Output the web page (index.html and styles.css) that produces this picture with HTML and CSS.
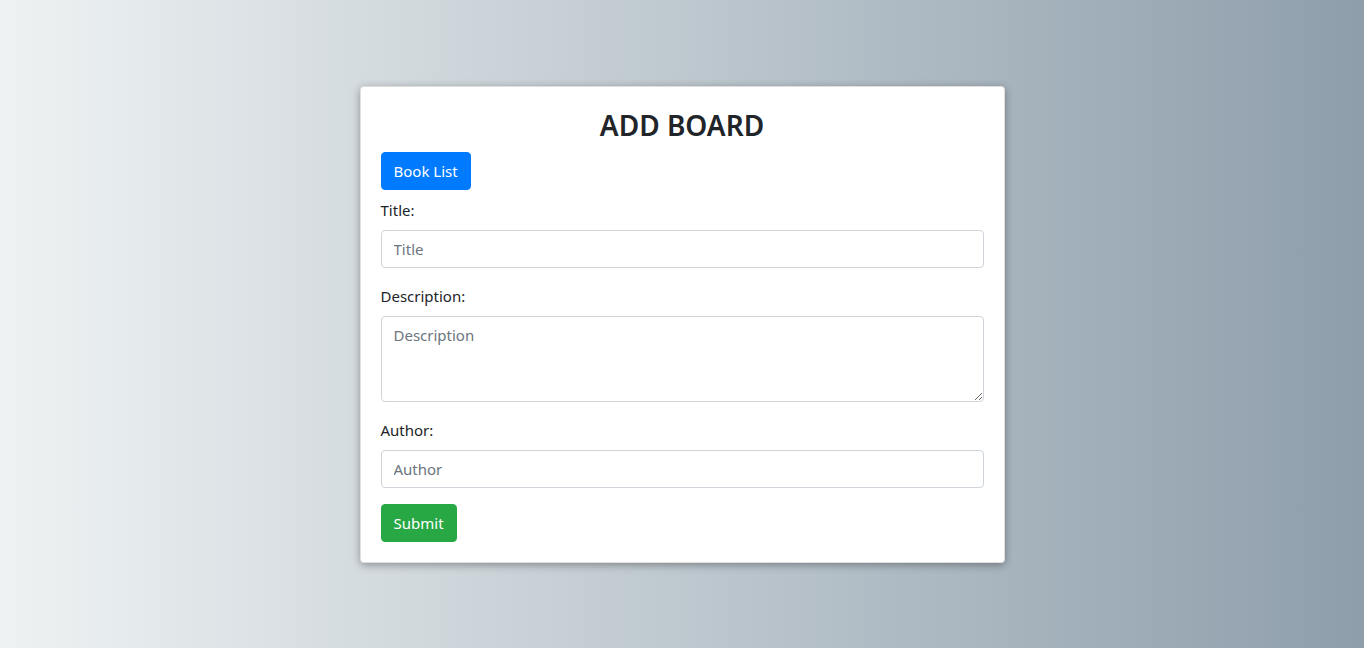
FILE: index.html
```html
<!DOCTYPE html>
<html lang="en">
<head>
<meta charset="utf-8">
<title>Add Board</title>
<link rel="stylesheet" href="styles.css">
</head>
<body>
<main class="page">
  <section class="card">
    <h2 class="card-title">ADD BOARD</h2>
    <div class="nav-row"><a class="btn btn-primary" href="#">Book List</a></div>
    <form class="form">
      <div class="form-group">
        <label for="title">Title:</label>
        <input class="form-control" id="title" type="text" placeholder="Title">
      </div>
      <div class="form-group">
        <label for="description">Description:</label>
        <textarea class="form-control" id="description" rows="3" placeholder="Description"></textarea>
      </div>
      <div class="form-group">
        <label for="author">Author:</label>
        <input class="form-control" id="author" type="text" placeholder="Author">
      </div>
      <button class="btn btn-success" type="button">Submit</button>
    </form>
  </section>
</main>
</body>
</html>
```

FILE: styles.css
```css
* { box-sizing: border-box; }
html, body { margin: 0; height: 100%; }
body {
  font-family: "Noto Sans", "Open Sans", sans-serif;
  font-size: 15px;
  line-height: 24px;
  color: #212529;
  background: linear-gradient(to right, #eef2f3, #8e9eab);
}
.page {
  display: flex;
  justify-content: center;
  padding-top: 86px;
}
.card {
  width: 645px;
  background: #fff;
  border: 1px solid rgba(0,0,0,.125);
  border-radius: 4px;
  padding: 19px 20px 20px 20px;
  box-shadow: 0 2px 8px rgba(0,0,0,.35);
}
.card-title {
  margin: 0 0 8px;
  font-size: 28px;
  font-weight: 600;
  line-height: 38.4px;
  text-align: center;
}
.nav-row { margin-bottom: 8px; display: flex; }
.btn {
  display: inline-block;
  font-family: inherit;
  font-size: 15px;
  line-height: 24px;
  padding: 6px 12px;
  border: 1px solid transparent;
  border-radius: 4px;
  color: #fff;
  text-decoration: none;
  cursor: pointer;
}
.btn-primary { background: #007bff; border-color: #007bff; }
.btn-success { background: #28a745; border-color: #28a745; }
.form-group { margin-bottom: 16px; }
label { display: inline-block; margin-bottom: 8px; }
.form-control {
  display: block;
  width: 100%;
  height: 38px;
  padding: 6px 12px;
  font-family: inherit;
  font-size: 15px;
  line-height: 24px;
  color: #495057;
  background: #fff;
  border: 1px solid #ced4da;
  border-radius: 4px;
}
textarea.form-control { height: 86px; resize: vertical; }
.form-control::placeholder { color: #6c757d; opacity: 1; }
```
